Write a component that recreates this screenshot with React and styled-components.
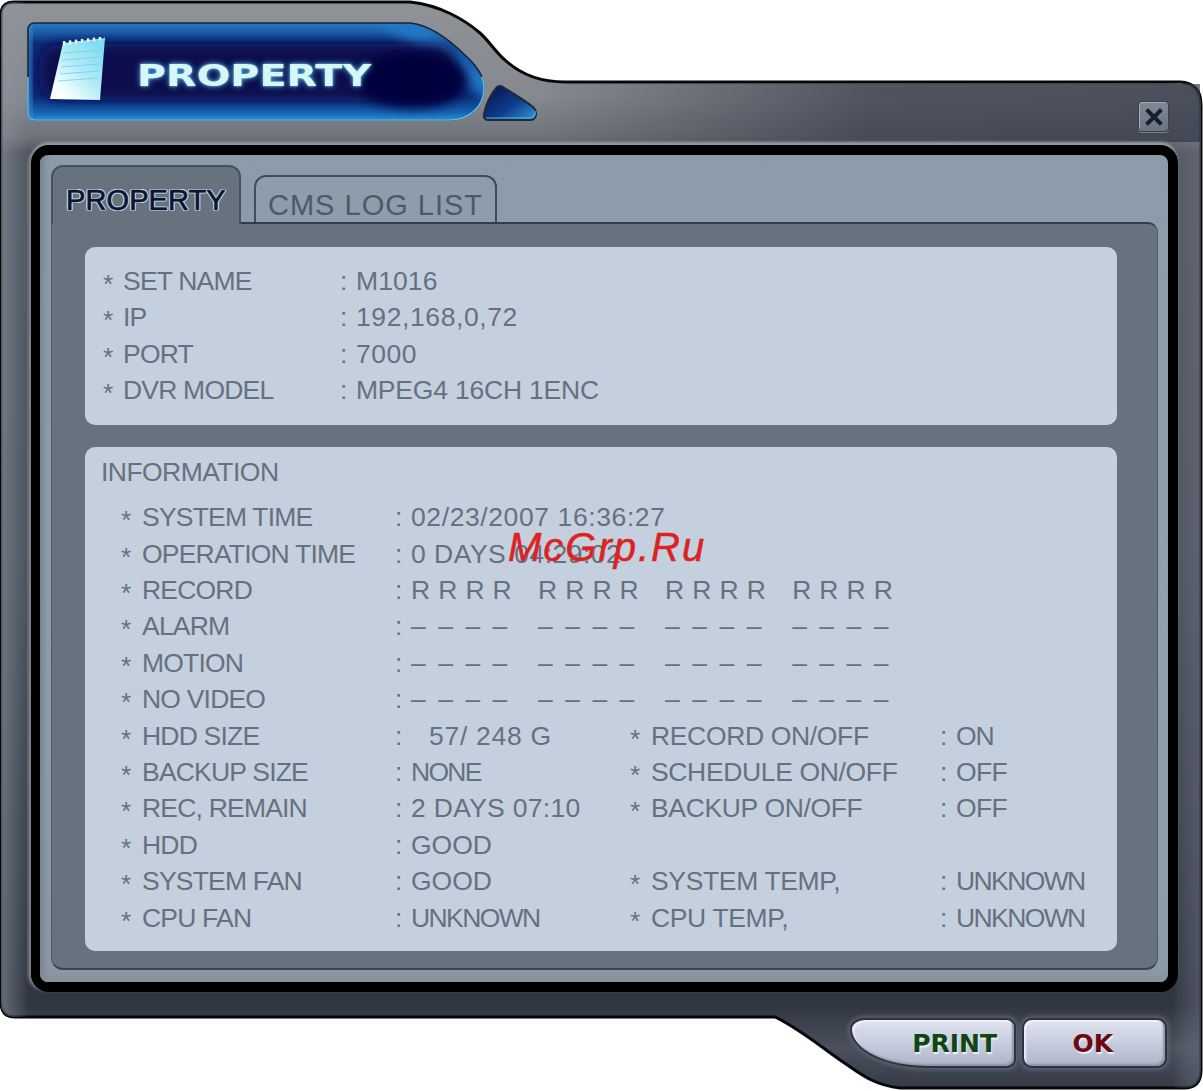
import React from "react";
import styled, { createGlobalStyle } from "styled-components";

const Global = createGlobalStyle`
  html, body { margin: 0; padding: 0; background: #fff; }
  #root { width: 1203px; height: 1091px; overflow: hidden; }
`;

const Window = styled.div`
  position: relative;
  width: 1203px;
  height: 1091px;
  display: flex;
  flex-direction: column;
  font-family: "Liberation Sans", Arial, sans-serif;
`;
const Shell = styled.svg`
  position: absolute;
  inset: 0;
  z-index: 0;
`;
const TitleBar = styled.header`
  position: relative;
  z-index: 1;
  height: 145px;
  box-sizing: border-box;
  padding: 22px 34px 0 27px;
  display: flex;
  align-items: flex-start;
`;
const Banner = styled.div`
  position: relative;
  width: 458px;
  height: 99px;
  box-sizing: border-box;
  padding-left: 23px;
  display: flex;
  align-items: center;
`;
const BannerArt = styled.svg`
  position: absolute;
  inset: 0;
`;
const NoteIcon = styled.svg`
  position: relative;
  flex: none;
  align-self: flex-start;
  margin-top: 15px;
`;
const BannerTitle = styled.h1`
  position: relative;
  margin: 8px 0 0 31px;
  font: 700 31px/1 "DejaVu Sans", sans-serif;
  color: #d6f6f8;
  text-shadow: 0 0 6px #4fb0e0, 0 0 2px #8fdcf0;
  transform: scaleX(1.28);
  transform-origin: left center;
`;
const Wedge = styled.svg`
  flex: none;
  margin: 62px 0 0 -3px;
`;
const CloseButton = styled.button`
  flex: none;
  margin: 79px 0 0 auto;
  width: 31px;
  height: 31px;
  padding: 0;
  display: grid;
  place-items: center;
  background: linear-gradient(180deg, #7f8895, #6b7480);
  border: 1px solid #3a414c;
  border-radius: 4px;
  box-shadow: inset 1px 1px 0 #a6adb8, 0 1px 0 #7c838e;
`;
const BlackFrame = styled.main`
  position: relative;
  z-index: 1;
  margin: 0 25px 0 31px;
  width: 1147px;
  height: 847px;
  box-sizing: border-box;
  border: 10px solid #000;
  border-left-width: 9px;
  border-radius: 18px;
  background: linear-gradient(180deg, #8c9baa 0, #8f9fae 60%, #8b9aa6 100%);
  box-shadow: 0 -4px 3px -1px #989ba1, -4px 0 3px -1px #7b7f88;
  padding: 10px 10px 12px 11px;
  display: flex;
  flex-direction: column;
  &::after {
    content: "";
    position: absolute;
    inset: 0;
    border-radius: 8px;
    pointer-events: none;
    box-shadow: inset 0 -14px 8px -8px #8a9196, inset 10px 0 6px -6px #788490;
  }
`;
const Tabs = styled.nav`
  position: relative;
  z-index: 2;
  height: 57px;
  display: flex;
  align-items: flex-end;
  flex: none;
`;
const Tab = styled.div`
  box-sizing: border-box;
  height: ${(p) => (p.$active ? "59px" : "47px")};
  width: ${(p) => (p.$active ? "190px" : "243px")};
  margin: ${(p) => (p.$active ? "0 0 -2px 0" : "0 0 0 13px")};
  padding: ${(p) => (p.$active ? "18px 0 0 13px" : "13px 0 0 12px")};
  background: ${(p) => (p.$active ? "#66737f" : "#8d9dab")};
  border: 2px solid ${(p) => (p.$active ? "#45525e" : "#3e4d59")};
  border-bottom: none;
  border-radius: 12px 12px 0 0;
  font-size: 29px;
  line-height: 30px;
  white-space: nowrap;
  color: ${(p) => (p.$active ? "#0b1430" : "#4c5a67")};
  -webkit-text-stroke: ${(p) => (p.$active ? "0.7px #0b1430" : "0")};
  text-shadow: ${(p) =>
    p.$active
      ? "1.4px 0 0 #c6d6e4, -1.4px 0 0 #c6d6e4, 0 1.4px 0 #c6d6e4, 0 -1.4px 0 #c6d6e4, 1px 1px 0 #c6d6e4, -1px -1px 0 #c6d6e4, 1px -1px 0 #c6d6e4, -1px 1px 0 #c6d6e4"
      : "none"};
  letter-spacing: ${(p) => (p.$active ? "0.1px" : "1px")};
`;
const TabBody = styled.section`
  flex: 1;
  min-height: 0;
  box-sizing: border-box;
  background: #66737f;
  border-top: 2px solid #2f3e4a;
  border-bottom: 2px solid #35434e;
  border-left: 1px solid #4c5a66;
  border-right: 1px solid #4c5a66;
  border-radius: 0 10px 12px 12px;
  padding: 23px 40px 17px 33px;
  display: flex;
  flex-direction: column;
  gap: 22px;
`;
const Card = styled.div`
  background: #c5d0de;
  border-radius: 10px;
  box-sizing: border-box;
  height: ${(p) => p.$h}px;
  padding: ${(p) => p.$pad};
  color: #66717f;
  font-size: 26.5px;
`;
const Heading = styled.div`
  height: 36px;
  line-height: 36px;
  margin-bottom: 9.5px;
  letter-spacing: -0.55px;
`;
const Rows = styled.div`
  display: grid;
  grid-template-columns: ${(p) => p.$cols};
  grid-auto-rows: 36.4px;
  line-height: 36.4px;
  white-space: nowrap;
  margin-left: ${(p) => p.$indent || 0}px;
`;
const Star = styled.span`
  transform: translateY(3px);
`;
const Label = styled.span`
  letter-spacing: ${(p) => (p.$second ? "-0.35px" : "-0.8px")};
`;
const Colon = styled.span``;
const Value = styled.span`
  padding-left: ${(p) => p.$indent || 0}px;
  letter-spacing: ${(p) => p.$ls || 0}px;
  grid-column: ${(p) => (p.$wide ? "4 / -1" : "auto")};
`;
const Ticks = styled.span`
  grid-column: 4 / -1;
  display: flex;
`;
const TickGroup = styled.span`
  display: flex;
  margin-right: 18.3px;
`;
const Tick = styled.span`
  width: 27.2px;
`;
const Blank = styled.span`
  grid-column: span 4;
`;
const Footer = styled.footer`
  position: relative;
  z-index: 1;
  margin-top: 26px;
  padding-right: 36px;
  display: flex;
  justify-content: flex-end;
  gap: 6px;
`;
const FootButton = styled.button`
  box-sizing: border-box;
  height: 50px;
  width: ${(p) => p.$w}px;
  padding: 0 ${(p) => p.$pr}px 0 0;
  display: flex;
  align-items: center;
  justify-content: flex-end;
  background: linear-gradient(180deg, #dfe4f0 0, #c9cfe0 45%, #aeb5ca 100%);
  border: 2px solid #2e343f;
  border-radius: ${(p) => p.$radius};
  box-shadow: 0 0 4px 2px #5c6370, inset -2px -2px 2px #8f96aa, inset 2px 2px 2px #eef1f7;
  font: 700 25px/1 "DejaVu Sans", sans-serif;
  color: ${(p) => p.$color};
  text-shadow: 1px 2px 1px #eef1f6;
`;
const Watermark = styled.div`
  position: absolute;
  z-index: 5;
  left: 508px;
  top: 525px;
  font: italic 400 40px/44px "Liberation Sans", Arial, sans-serif;
  letter-spacing: 2px;
  -webkit-text-stroke: 0.5px #dc2222;
  color: #dc2222;
  white-space: nowrap;
`;

const top = [
  ["SET NAME", "M1016", 0.1],
  ["IP", "192,168,0,72", 0.6],
  ["PORT", "7000", 0.5],
  ["DVR MODEL", "MPEG4 16CH 1ENC", -0.2],
];

const Marks = ({ c }) => (
  <Ticks>
    {[0, 1, 2, 3].map((g) => (
      <TickGroup key={g}>
        {[0, 1, 2, 3].map((i) => (
          <Tick key={i}>{c}</Tick>
        ))}
      </TickGroup>
    ))}
  </Ticks>
);

const Pair = ({ label, value, indent, ls, second }) => (
  <>
    <Star>*</Star>
    <Label $second={second}>{label}</Label>
    <Colon>:</Colon>
    <Value $indent={indent} $ls={ls}>
      {value}
    </Value>
  </>
);
const Wide = ({ label, value, ls }) => (
  <>
    <Star>*</Star>
    <Label>{label}</Label>
    <Colon>:</Colon>
    <Value $wide $ls={ls}>
      {value}
    </Value>
  </>
);
const Mark = ({ label, c }) => (
  <>
    <Star>*</Star>
    <Label>{label}</Label>
    <Colon>:</Colon>
    <Marks c={c} />
  </>
);

const OUTLINE =
  "M14 2 H410 C440 5 465 20 480 33 C490 42 497 54 505 60 C520 74 540 82 565 82 H1180 Q1201 83 1201 105 V1070 Q1201 1088 1184 1088 H900 C872 1085 858 1072 840 1060 C820 1046 798 1028 775 1017 H15 Q1 1017 1 1002 V15 Q1 2 14 2 Z";
const BANNER =
  "M8 1 H383 C405 3 425 20 440 35 C452 46 457 56 457 66 C457 85 442 98 422 98 H8 Q1 98 1 91 V8 Q1 1 8 1 Z";

export default function App() {
  return (
    <Window>
      <Global />
      <Shell width="1203" height="1091" aria-hidden="true">
        <defs>
          <linearGradient id="shellV" x1="0" y1="0" x2="0" y2="1091" gradientUnits="userSpaceOnUse">
            <stop offset="0" stopColor="#8f9297" />
            <stop offset="0.09" stopColor="#85888e" />
            <stop offset="0.125" stopColor="#6f737b" />
            <stop offset="0.14" stopColor="#50565f" />
            <stop offset="0.5" stopColor="#4a505c" />
            <stop offset="0.92" stopColor="#2f3541" />
            <stop offset="0.96" stopColor="#4a515d" />
            <stop offset="1" stopColor="#333946" />
          </linearGradient>
          <linearGradient id="shellH" x1="0" y1="0" x2="1203" y2="0" gradientUnits="userSpaceOnUse">
            <stop offset="0" stopColor="#8d93a2" stopOpacity="0.6" />
            <stop offset="0.024" stopColor="#8d93a2" stopOpacity="0" />
            <stop offset="0.975" stopColor="#8d93a2" stopOpacity="0" />
            <stop offset="1" stopColor="#6d7482" stopOpacity="0.5" />
          </linearGradient>
          <linearGradient id="shellDark" x1="540" y1="0" x2="1203" y2="0" gradientUnits="userSpaceOnUse">
            <stop offset="0" stopColor="#2b3140" stopOpacity="0" />
            <stop offset="0.5" stopColor="#2b3140" stopOpacity="0.6" />
            <stop offset="1" stopColor="#2b3140" stopOpacity="0.65" />
          </linearGradient>
        </defs>
        <path d={OUTLINE} fill="url(#shellV)" stroke="#060709" strokeWidth="3" />
        <path d={OUTLINE} fill="url(#shellH)" />
        <rect x="540" y="84" width="660" height="58" fill="url(#shellDark)" />
      </Shell>

      <TitleBar>
        <Banner>
          <BannerArt width="458" height="99" viewBox="0 0 458 99" aria-hidden="true">
            <defs>
              <clipPath id="bannerClip">
                <path d={BANNER} />
              </clipPath>
              <clipPath id="bannerLower">
                <rect x="0" y="55" width="458" height="44" />
              </clipPath>
              <linearGradient id="bannerFill" x1="0" y1="0" x2="0" y2="1">
                <stop offset="0" stopColor="#2f7fc4" />
                <stop offset="0.1" stopColor="#1a5ea8" />
                <stop offset="0.22" stopColor="#0c2a76" />
                <stop offset="0.75" stopColor="#0c2a76" />
                <stop offset="0.92" stopColor="#1666b4" />
                <stop offset="1" stopColor="#2f95d8" />
              </linearGradient>
              <filter id="soft" x="-20%" y="-50%" width="140%" height="200%">
                <feGaussianBlur stdDeviation="6" />
              </filter>
            </defs>
            <g clipPath="url(#bannerClip)">
              <rect width="458" height="99" fill="url(#bannerFill)" />
              <rect x="-8" y="0" width="11" height="99" fill="#3a9ad8" filter="url(#soft)" />
              <path d="M345 -5 H395 L470 60 V85 Z" fill="#2478c4" filter="url(#soft)" />
              <rect x="12" y="22" width="418" height="56" rx="22" fill="#07084e" filter="url(#soft)" />
              <ellipse cx="385" cy="58" rx="56" ry="28" fill="#02023c" filter="url(#soft)" />
            </g>
            <path d={BANNER} fill="none" stroke="#16263a" strokeWidth="1.6" />
            <path d={BANNER} fill="none" stroke="#62bcea" strokeWidth="1.6" clipPath="url(#bannerLower)" />
          </BannerArt>
          <NoteIcon width="56" height="64" viewBox="0 0 56 64" aria-hidden="true">
            <defs>
              <linearGradient id="paper" x1="0.9" y1="0.1" x2="0.15" y2="0.95">
                <stop offset="0" stopColor="#7fdcf2" />
                <stop offset="0.5" stopColor="#b4ecf6" />
                <stop offset="0.85" stopColor="#f0fdff" />
                <stop offset="1" stopColor="#ffffff" />
              </linearGradient>
            </defs>
            <path d="M13 6 L55 1 L50 63 L0 62 Z" fill="url(#paper)" />
            <path d="M13 6 L55 1" stroke="#eafaff" strokeWidth="3.5" strokeDasharray="2.5 3.5" />
            <g stroke="#6fcfe8" strokeWidth="1" opacity="0.75">
              <path d="M13 16 L50 13" />
              <path d="M12 23 L50 20" />
              <path d="M11 30 L49 27" />
              <path d="M10 37 L49 34" />
              <path d="M8 44 L48 41" />
            </g>
          </NoteIcon>
          <BannerTitle>PROPERTY</BannerTitle>
        </Banner>
        <Wedge width="56" height="38" viewBox="0 0 56 38" aria-hidden="true">
          <defs>
            <linearGradient id="wedgeFill" x1="0.1" y1="0.2" x2="0.9" y2="0.9">
              <stop offset="0" stopColor="#071a5c" />
              <stop offset="0.55" stopColor="#0e3c8a" />
              <stop offset="1" stopColor="#2a86cc" />
            </linearGradient>
          </defs>
          <path
            d="M15 3 Q18 1 21 3 C30 9 44 17 52 24 C56 29 54 36 48 36 H7 Q1 36 2 30 C4 20 9 10 15 3 Z"
            fill="url(#wedgeFill)"
            stroke="#1d2a38"
            strokeWidth="2"
          />
          <path d="M4 34 H49 Q54 33 53 27" fill="none" stroke="#55b2e6" strokeWidth="1.2" />
        </Wedge>
        <CloseButton aria-label="close">
          <svg width="20" height="20" viewBox="0 0 20 20" aria-hidden="true">
            <path d="M4 4 L16 16 M16 4 L4 16" stroke="#14202c" strokeWidth="4" strokeLinecap="square" />
          </svg>
        </CloseButton>
      </TitleBar>

      <BlackFrame>
        <Tabs>
          <Tab $active>PROPERTY</Tab>
          <Tab>CMS LOG LIST</Tab>
        </Tabs>
        <TabBody>
          <Card $h={178} $pad="16px 0 0 18px">
            <Rows $cols="20px 217px 16px 1fr">
              {top.map(([l, v, ls]) => (
                <Pair key={l} label={l} value={v} ls={ls} />
              ))}
            </Rows>
          </Card>
          <Card $h={505} $pad="7px 0 0 16px">
            <Heading>INFORMATION</Heading>
            <Rows $indent={20} $cols="21px 253px 16px 219px 21px 289px 16px 1fr">
              <Wide label="SYSTEM TIME" value="02/23/2007 16:36:27" ls={0.6} />
              <Wide label="OPERATION TIME" value="0 DAYS 04:29:02" ls={0.5} />
              <Mark label="RECORD" c="R" />
              <Mark label="ALARM" c="–" />
              <Mark label="MOTION" c="–" />
              <Mark label="NO VIDEO" c="–" />
              <Pair label="HDD SIZE" value="57/ 248 G" indent={18} ls={0.7} />
              <Pair second label="RECORD ON/OFF" value="ON" ls={-1} />
              <Pair label="BACKUP SIZE" value="NONE" ls={-1.7} />
              <Pair second label="SCHEDULE ON/OFF" value="OFF" ls={-0.7} />
              <Pair label="REC, REMAIN" value="2 DAYS 07:10" ls={0.3} />
              <Pair second label="BACKUP ON/OFF" value="OFF" ls={-0.7} />
              <Pair label="HDD" value="GOOD" />
              <Blank />
              <Pair label="SYSTEM FAN" value="GOOD" />
              <Pair second label="SYSTEM TEMP," value="UNKNOWN" ls={-1.6} />
              <Pair label="CPU FAN" value="UNKNOWN" ls={-1.6} />
              <Pair second label="CPU TEMP," value="UNKNOWN" ls={-1.6} />
            </Rows>
          </Card>
        </TabBody>
      </BlackFrame>

      <Footer>
        <FootButton $w={166} $pr={17} $color="#0f4612" $radius="16px 10px 10px 84px / 12px 10px 10px 42px">
          PRINT
        </FootButton>
        <FootButton $w={145} $pr={52} $color="#6c0a14" $radius="10px">
          OK
        </FootButton>
      </Footer>
      <Watermark>McGrp.Ru</Watermark>
    </Window>
  );
}
